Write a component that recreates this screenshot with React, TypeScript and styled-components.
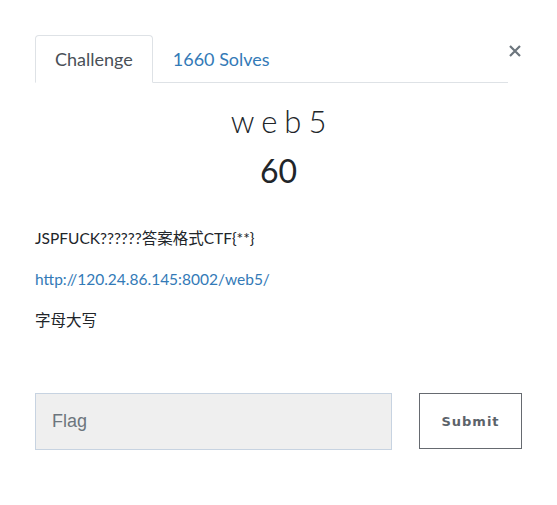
import React from "react";
import styled, { createGlobalStyle } from "styled-components";

const Global = createGlobalStyle`
  html, body { margin: 0; padding: 0; background: #fff; }
  body { font-family: Lato, "Noto Sans CJK SC", sans-serif; color: #212529; }
`;

const Modal = styled.div`
  width: 557px;
  box-sizing: border-box;
  padding: 35px 35px 40px 35px;
`;

const Header = styled.div`
  display: flex;
  align-items: flex-start;
`;

const Tabs = styled.ul`
  flex: 1;
  display: flex;
  list-style: none;
  margin: 0;
  padding: 0;
  border-bottom: 1px solid #dee2e6;
`;

const Tab = styled.li<{ $active?: boolean }>`
  margin-bottom: -1px;
  padding: 0 19px 0 19px;
  height: 46px;
  display: flex;
  align-items: center;
  font-size: 18px;
  border: 1px solid ${(p) => (p.$active ? "#dee2e6" : "transparent")};
  border-bottom-color: ${(p) => (p.$active ? "#fff" : "transparent")};
  border-radius: 4px 4px 0 0;
  background: ${(p) => (p.$active ? "#fff" : "transparent")};
  color: ${(p) => (p.$active ? "#495057" : "#337ab7")};
`;

const Close = styled.button`
  width: 14px;
  height: 30px;
  margin-top: 1px;
  padding: 0;
  border: none;
  background: none;
  display: flex;
  justify-content: center;
  align-items: center;
  overflow: visible;
`;

const Title = styled.h3`
  margin: 19px 0 0;
  text-align: center;
  font-family: Lato, sans-serif;
  font-weight: 300;
  font-size: 31px;
  letter-spacing: 7px;
  text-indent: 7px;
  line-height: 38px;
  color: #212529;
`;

const Value = styled.h4`
  margin: 10px 0 0;
  text-align: center;
  font-weight: 400;
  font-size: 32px;
  line-height: 42px;
  color: #212529;
`;

const Description = styled.div`
  margin-top: 36px;
  font-size: 15.5px;
  line-height: 21px;
`;

const Para = styled.p`
  margin: 0 0 20px;
`;

const Link = styled.a`
  color: #337ab7;
  text-decoration: none;
`;

const Form = styled.div`
  display: flex;
  gap: 27px;
  margin-top: 62px;
`;

const Input = styled.input`
  width: 357px;
  height: 57px;
  box-sizing: border-box;
  background: #efefef;
  border: 1px solid #c7d3e1;
  border-radius: 0;
  padding: 0 16px;
  font-family: "Liberation Sans", Arial, sans-serif;
  font-size: 18px;
  color: #495057;
  &::placeholder { color: #6c757d; }
`;

const Submit = styled.button`
  width: 103px;
  height: 56px;
  box-sizing: border-box;
  background: #fff;
  border: 1px solid #666a70;
  font-family: "DejaVu Sans", sans-serif;
  font-weight: bold;
  font-size: 13px;
  letter-spacing: 1px;
  color: #5c636a;
`;

export default function App() {
  return (
    <>
      <Global />
      <Modal>
        <Header>
          <Tabs>
            <Tab $active>Challenge</Tab>
            <Tab>1660 Solves</Tab>
          </Tabs>
          <Close aria-label="Close">
            <svg width="14" height="14" viewBox="0 0 14 14">
              <path d="M2 2 L12 12 M12 2 L2 12" stroke="#6c757d" strokeWidth="2.2" strokeLinecap="butt" />
            </svg>
          </Close>
        </Header>
        <Title>web5</Title>
        <Value>60</Value>
        <Description>
          <Para>JSPFUCK??????答案格式CTF{"{**}"}</Para>
          <Para>
            <Link href="#">http://120.24.86.145:8002/web5/</Link>
          </Para>
          <Para>字母大写</Para>
        </Description>
        <Form>
          <Input placeholder="Flag" />
          <Submit>Submit</Submit>
        </Form>
      </Modal>
    </>
  );
}
